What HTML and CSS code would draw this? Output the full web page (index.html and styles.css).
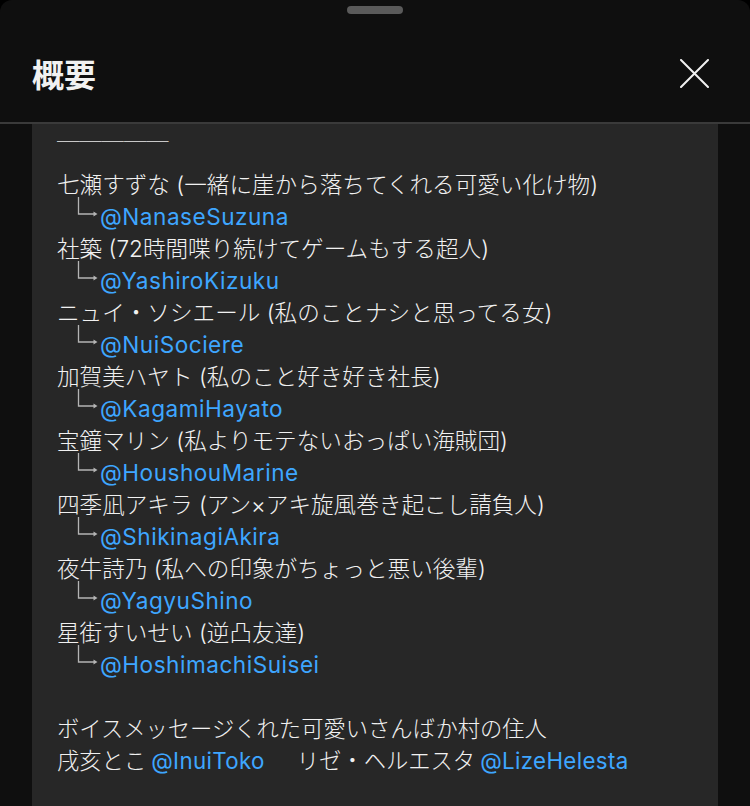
FILE: index.html
```html
<!DOCTYPE html>
<html lang="ja">
<head>
<meta charset="utf-8">
<link rel="stylesheet" href="styles.css">
</head>
<body>
<div class="sheet">
  <div class="grab"><div class="handle"></div></div>
  <div class="header">
    <h1 class="title">概要</h1>
    <button class="close" aria-label="閉じる">
      <svg width="29" height="29" viewBox="0 0 29 29"><path d="M1 1 L28 28 M28 1 L1 28" stroke="#f1f1f1" stroke-width="2" stroke-linecap="round" fill="none"/></svg>
    </button>
  </div>
  <div class="body">
    <div class="panel">
      <div class="rule">─────</div>
      <div class="line">七瀬すずな (一緒に崖から落ちてくれる可愛い化け物)</div>
      <div class="line sub"><svg class="arrow" width="22" height="16" viewBox="0 0 22 16"><path d="M1.5 -4 V13 H17" stroke="#b4b4b4" stroke-width="1.3" fill="none"/><path d="M16.5 10.5 L20.5 13 L16.5 15.5 Z" fill="#b4b4b4"/></svg><a class="link">@NanaseSuzuna</a></div>
      <div class="line">社築 (72時間喋り続けてゲームもする超人)</div>
      <div class="line sub"><svg class="arrow" width="22" height="16" viewBox="0 0 22 16"><path d="M1.5 -4 V13 H17" stroke="#b4b4b4" stroke-width="1.3" fill="none"/><path d="M16.5 10.5 L20.5 13 L16.5 15.5 Z" fill="#b4b4b4"/></svg><a class="link">@YashiroKizuku</a></div>
      <div class="line">ニュイ・ソシエール (私のことナシと思ってる女)</div>
      <div class="line sub"><svg class="arrow" width="22" height="16" viewBox="0 0 22 16"><path d="M1.5 -4 V13 H17" stroke="#b4b4b4" stroke-width="1.3" fill="none"/><path d="M16.5 10.5 L20.5 13 L16.5 15.5 Z" fill="#b4b4b4"/></svg><a class="link">@NuiSociere</a></div>
      <div class="line">加賀美ハヤト (私のこと好き好き社長)</div>
      <div class="line sub"><svg class="arrow" width="22" height="16" viewBox="0 0 22 16"><path d="M1.5 -4 V13 H17" stroke="#b4b4b4" stroke-width="1.3" fill="none"/><path d="M16.5 10.5 L20.5 13 L16.5 15.5 Z" fill="#b4b4b4"/></svg><a class="link">@KagamiHayato</a></div>
      <div class="line">宝鐘マリン (私よりモテないおっぱい海賊団)</div>
      <div class="line sub"><svg class="arrow" width="22" height="16" viewBox="0 0 22 16"><path d="M1.5 -4 V13 H17" stroke="#b4b4b4" stroke-width="1.3" fill="none"/><path d="M16.5 10.5 L20.5 13 L16.5 15.5 Z" fill="#b4b4b4"/></svg><a class="link">@HoushouMarine</a></div>
      <div class="line">四季凪アキラ (アン×アキ旋風巻き起こし請負人)</div>
      <div class="line sub"><svg class="arrow" width="22" height="16" viewBox="0 0 22 16"><path d="M1.5 -4 V13 H17" stroke="#b4b4b4" stroke-width="1.3" fill="none"/><path d="M16.5 10.5 L20.5 13 L16.5 15.5 Z" fill="#b4b4b4"/></svg><a class="link">@ShikinagiAkira</a></div>
      <div class="line">夜牛詩乃 (私への印象がちょっと悪い後輩)</div>
      <div class="line sub"><svg class="arrow" width="22" height="16" viewBox="0 0 22 16"><path d="M1.5 -4 V13 H17" stroke="#b4b4b4" stroke-width="1.3" fill="none"/><path d="M16.5 10.5 L20.5 13 L16.5 15.5 Z" fill="#b4b4b4"/></svg><a class="link">@YagyuShino</a></div>
      <div class="line">星街すいせい (逆凸友達)</div>
      <div class="line sub"><svg class="arrow" width="22" height="16" viewBox="0 0 22 16"><path d="M1.5 -4 V13 H17" stroke="#b4b4b4" stroke-width="1.3" fill="none"/><path d="M16.5 10.5 L20.5 13 L16.5 15.5 Z" fill="#b4b4b4"/></svg><a class="link">@HoshimachiSuisei</a></div>
      <div class="line blank"></div>
      <div class="line small">ボイスメッセージくれた可愛いさんばか村の住人</div>
      <div class="line small">戌亥とこ<span class="sp"></span><a class="link tight">@InuiToko</a><span class="gap"></span>リゼ・ヘルエスタ<span class="sp"></span><a class="link tight">@LizeHelesta</a></div>
    </div>
  </div>
</div>
</body>
</html>
```

FILE: styles.css
```css
* { box-sizing: border-box; }
html, body {
  margin: 0;
  padding: 0;
  background: #000;
}
body {
  font-family: "Inter", "Noto Sans CJK JP", sans-serif;
  color: #f1f1f1;
}
.sheet {
  width: 750px;
  height: 806px;
  overflow: hidden;
  background: #0f0f0f;
  border-radius: 12px 12px 0 0;
}
.grab {
  height: 20px;
  padding-top: 6px;
  display: flex;
  justify-content: center;
}
.handle {
  width: 56px;
  height: 8px;
  border-radius: 4px;
  background: #5a5a5a;
}
.header {
  height: 124px;
  margin-top: -20px;
  padding: 24px 41px 0 32px;
  display: flex;
  align-items: center;
  justify-content: space-between;
  border-bottom: 2px solid #3a3a3a;
}
.title {
  margin: 0;
  font-family: "Noto Sans CJK JP", sans-serif;
  font-size: 32px;
  font-weight: 700;
  line-height: 40px;
  color: #f1f1f1;
}
.close {
  background: none;
  border: 0;
  padding: 0;
  width: 29px;
  height: 29px;
  display: flex;
}
.body {
  padding: 0 32px;
}
.panel {
  background: #272727;
  padding: 0 25px 40px;
  min-height: 700px;
}
.rule {
  font-family: "Noto Sans CJK JP", sans-serif;
  font-size: 22.3px;
  font-weight: 100;
  line-height: 32px;
  height: 32px;
  color: #c8c8c8;
  margin-bottom: 13px;
}
.line {
  font-size: 22.6px;
  line-height: 32px;
  height: 32px;
  white-space: nowrap;
  font-weight: 300;
}
.line.small {
  font-size: 22.3px;
}
.line.sub {
  padding-left: 20px;
}
.arrow {
  display: inline-block;
  vertical-align: 8px;
  overflow: visible;
  margin-right: 1px;
}
.link {
  color: #3ea6ff;
  font-weight: 400;
  letter-spacing: 0.5px;
}
.link.tight {
  letter-spacing: 0.35px;
}
.sp {
  display: inline-block;
  width: 5px;
}
.gap {
  display: inline-block;
  width: 32px;
}
```
